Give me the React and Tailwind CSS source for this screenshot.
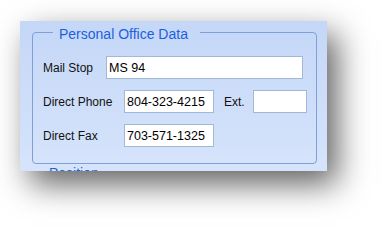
import React from 'react';

const font = { fontFamily: '"Liberation Sans", Arial, sans-serif' };

function Field({ value, className }) {
  return (
    <input
      readOnly
      value={value}
      className={`h-[23px] border border-[#a3b7d7] bg-white pl-[2px] text-[12.5px] text-black outline-none ${className}`}
    />
  );
}

export default function App() {
  return (
    <div className="w-[382px] h-[226px] bg-white pl-[20px] pt-[21px] overflow-hidden" style={font}>
      <div className="w-[307px] h-[150px] overflow-hidden bg-linear-to-b from-[#c4d7f7] to-[#d6e4fb] pl-[12px] pt-[1px] shadow-[10px_13px_30px_rgba(0,0,0,0.62)]">
        <fieldset className="w-[285px] rounded-[4px] border border-[#7f9fd9] pl-[10px] pt-[14px] pb-[16px]">
          <legend className="ml-[10px] pl-[6px] pr-[12px] pt-[4px] text-[14px] leading-[16px] text-[#1f5fdc]">
            Personal Office Data
          </legend>

          <div className="flex flex-col gap-[11px] text-[12px] text-[#111]">
            <div className="flex items-center">
              <span className="w-[63px]">Mail Stop</span>
              <Field value="MS 94" className="w-[197px]" />
            </div>

            <div className="flex items-center">
              <span className="w-[81px]">Direct Phone</span>
              <Field value="804-323-4215" className="w-[90px]" />
              <span className="ml-[10px] w-[29px]">Ext.</span>
              <Field value="" className="w-[54px]" />
            </div>

            <div className="flex items-center">
              <span className="w-[81px]">Direct Fax</span>
              <Field value="703-571-1325" className="w-[90px]" />
            </div>
          </div>
        </fieldset>

        <fieldset className="mt-[1px] w-[285px] h-[60px] rounded-[4px] border border-[#7f9fd9]">
          <legend className="ml-[10px] pl-[6px] pr-[6px] text-[14px] leading-[16px] text-[#1f5fdc]">
            Position
          </legend>
        </fieldset>
      </div>
    </div>
  );
}
